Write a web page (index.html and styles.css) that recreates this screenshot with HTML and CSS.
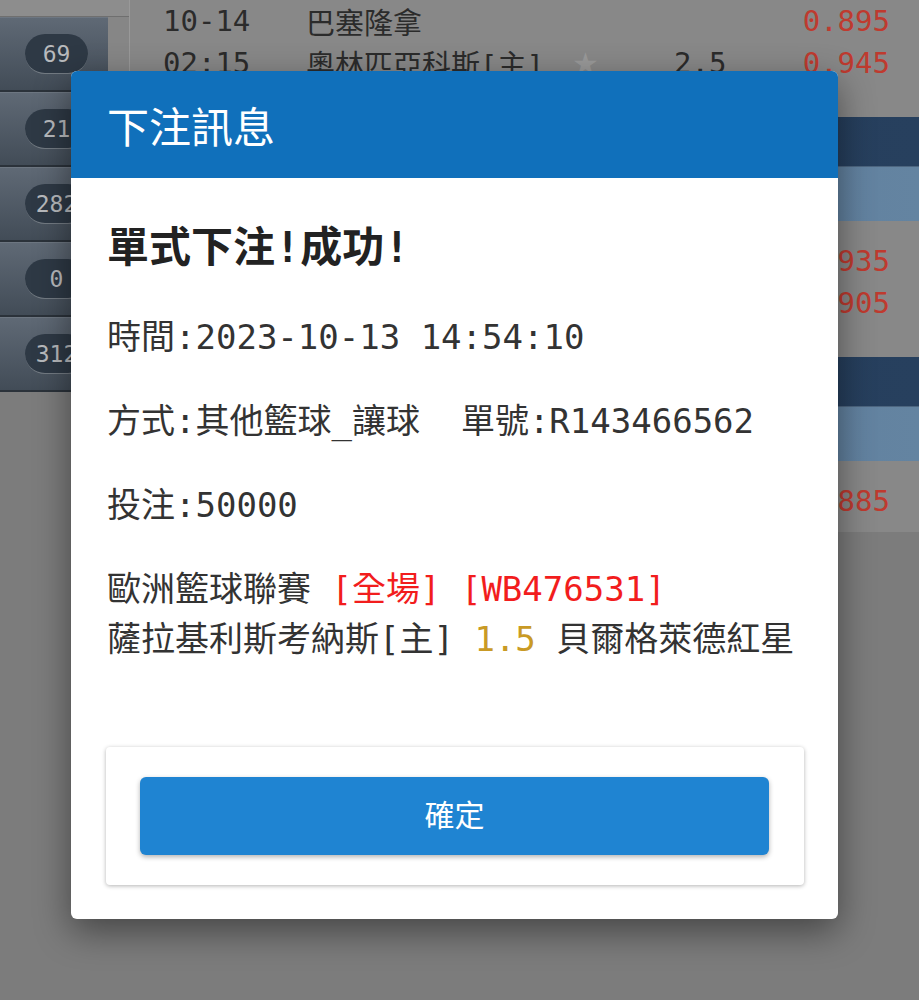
FILE: index.html
```html
<!DOCTYPE html>
<html lang="zh-Hant">
<head>
<meta charset="UTF-8">
<title>下注訊息</title>
<link rel="stylesheet" href="styles.css">
</head>
<body>
<div id="page">
	<!-- 왼쪽 메뉴 -->
	<div class="side">
		<div class="sideTop"></div>
		<div class="sideItem"><span class="pill">69</span></div>
		<div class="sideItem"><span class="pill">21</span></div>
		<div class="sideItem"><span class="pill">282</span></div>
		<div class="sideItem"><span class="pill">0</span></div>
		<div class="sideItem"><span class="pill">312</span></div>
	</div>

	<!-- 경기 목록 -->
	<div class="main">
		<div class="match first">
			<div class="row"><span class="time">10-14</span><span class="team">巴塞隆拿</span><span class="star"></span><span class="hdp"></span><span class="odds">0.895</span></div>
			<div class="row"><span class="time">02:15</span><span class="team">奧林匹亞科斯[主]</span><span class="star">★</span><span class="hdp">2.5</span><span class="odds">0.945</span></div>
		</div>
		<div class="league"></div>
		<div class="sub"></div>
		<div class="match">
			<div class="row"><span class="odds">0.935</span></div>
			<div class="row"><span class="odds">0.905</span></div>
		</div>
		<div class="league"></div>
		<div class="sub"></div>
		<div class="match last">
			<div class="row"><span class="odds">0.885</span></div>
		</div>
	</div>
</div>

<!-- 결과 팝업 -->
<div class="dialog">
	<div class="dlgHead">下注訊息</div>
	<div class="dlgBody">
		<h2 class="result">單式下注!成功!</h2>
		<p class="info">時間:2023-10-13 14:54:10</p>
		<p class="info">方式:其他籃球_讓球&nbsp;&nbsp;單號:R143466562</p>
		<p class="info">投注:50000</p>
		<p class="info">歐洲籃球聯賽 <span class="red">[全場]</span> <span class="red">[WB476531]</span><br>薩拉基利斯考納斯[主] <span class="gold">1.5</span> 貝爾格萊德紅星</p>
		<div class="btnBox">
			<button type="button" class="btnOk">確定</button>
		</div>
	</div>
</div>
</body>
</html>
```

FILE: styles.css
```css
* { padding: 0; margin: 0; box-sizing: border-box; }
html, body { height: 100%; overflow: hidden; }
body { background-color: #7c7c7c; font-family: "DejaVu Sans Mono", "Noto Sans CJK TC", monospace; }

#page { display: flex; height: 100%; }

.side { width: 130px; flex-shrink: 0; background-color: #868686; border-right: 1px solid #999; align-self: flex-start; }
.sideTop { height: 17px; background-color: #8d8d8d; border-bottom: 1px solid #6f6f6f; }
.sideItem { width: 108px; height: 75px; display: flex; align-items: center; background: linear-gradient(#5f6975, #424c57); border-top: 1px solid #6d7681; border-bottom: 2px solid #2b323a; }
.pill { margin-left: 25px; min-width: 63px; height: 40px; padding: 0 8px; border-radius: 20px; background-color: #2e3945; border-bottom: 1px solid #737b83; color: #b8babd; font-size: 23px; line-height: 40px; text-align: center; }

.main { flex: 1; align-self: flex-start; color: #2b2b2b; font-size: 29px; }
.match { background-color: #888; padding: 19px 0 33px 0; }
.match.first { padding-top: 0; }
.match.last { padding-bottom: 10px; }
.row { height: 42px; display: flex; align-items: center; padding: 0 29px 0 33px; white-space: nowrap; }
.time { width: 143px; }
.team { width: 266px; }
.star { width: 102px; color: #9a9a9a; font-family: "DejaVu Sans", sans-serif; font-size: 30px; }
.hdp { flex: 1; }
.odds { margin-left: auto; color: #bf3a2f; }
.league { height: 50px; background: linear-gradient(to right, #21385a, #27405e); border-bottom: 1px solid #4d6680; }
.sub { height: 54px; background: linear-gradient(to right, #52739a, #6484a1); }

.dialog { position: absolute; left: 71px; top: 71px; width: 767px; background-color: white; border-radius: 6px; overflow: hidden; box-shadow: 0 12px 36px rgba(0,0,0,0.45); }
.dlgHead { height: 107px; padding-left: 36px; display: flex; align-items: center; background-color: #1070bb; color: white; font-family: "Noto Sans CJK TC", sans-serif; font-size: 42px; }
.dlgBody { padding: 45px 34px 34px 36px; color: #333; }
.result { font-size: 42px; line-height: 50px; font-weight: bold; color: #222; margin-bottom: 39px; }
.info { font-size: 34px; line-height: 50px; margin-bottom: 34px; white-space: nowrap; }
.red { color: #f21d1d; }
.gold { color: #c99a25; }
.btnBox { margin: 83px 0 0 -1px; padding: 30px 35px 30px 34px; border-radius: 4px; background-color: white; box-shadow: 0 1px 4px rgba(0,0,0,0.3); }
.btnOk { width: 100%; height: 78px; padding-bottom: 6px; border: none; border-radius: 6px; background-color: #1f84d2; color: white; font-family: "Noto Sans CJK TC", sans-serif; font-size: 30px; font-weight: 400; box-shadow: 0 2px 5px rgba(0,0,0,0.3); cursor: pointer; }
```
